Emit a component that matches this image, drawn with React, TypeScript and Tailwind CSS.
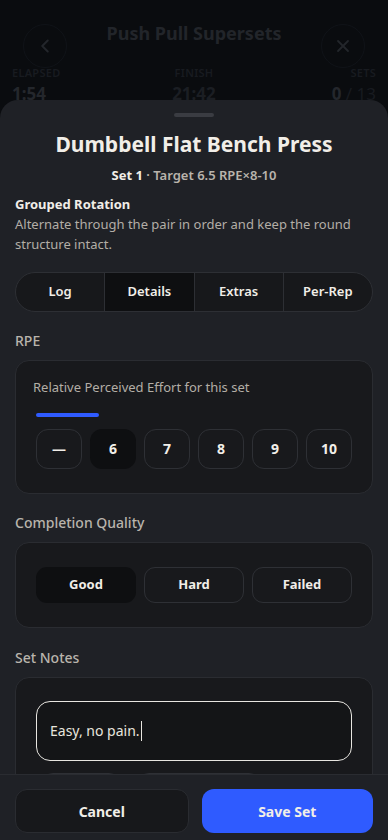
import { ChevronLeft, X } from "lucide-react";

const rpeValues = ["—", "6", "7", "8", "9", "10"];
const qualities = ["Good", "Hard", "Failed"];
const tabs = ["Log", "Details", "Extras", "Per-Rep"];

export default function App() {
  return (
    <div
      className="relative h-[840px] w-full overflow-hidden bg-[#0a0c0f]"
      style={{ fontFamily: '"Noto Sans", "Open Sans", sans-serif' }}
    >
      {/* background screen (dimmed) */}
      <div className="px-3 pt-6">
        <div className="flex items-center justify-between px-[11px]">
          <div className="flex h-11 w-11 items-center justify-center rounded-full border border-[#101318]">
            <ChevronLeft size={22} strokeWidth={2.2} className="text-[#23262b]" />
          </div>
          <h1 className="-mt-[26px] text-[18px] font-bold text-[#22252a]">
            Push Pull Supersets
          </h1>
          <div className="flex h-11 w-11 items-center justify-center rounded-full border border-[#101318]">
            <X size={20} strokeWidth={2.2} className="text-[#23262b]" />
          </div>
        </div>
        <div className="-mt-[3px] grid grid-cols-3">
          <div>
            <div className="text-[11px] font-semibold tracking-wide text-[#181b20]">ELAPSED</div>
            <div className="text-[17px] font-bold leading-6 text-[#24272c]">1:54</div>
          </div>
          <div className="text-center">
            <div className="text-[11px] font-semibold tracking-wide text-[#181b20]">FINISH</div>
            <div className="text-[17px] font-bold leading-6 text-[#1b1e23]">21:42</div>
          </div>
          <div className="text-right">
            <div className="text-[11px] font-semibold tracking-wide text-[#181b20]">SETS</div>
            <div className="text-[17px] leading-6">
              <span className="font-bold text-[#24272c]">0</span>
              <span className="text-[#181b20]"> / 13</span>
            </div>
          </div>
        </div>
      </div>

      {/* bottom sheet */}
      <div className="absolute inset-x-0 bottom-0 top-[100px] flex flex-col rounded-t-[18px] bg-[#1f2126]">
        <div className="flex-1 overflow-hidden px-[15px]">
          <div className="mx-auto mt-[13px] h-[4px] w-10 rounded-full bg-[#3a3c42]" />

          <h2 className="mt-[13px] text-center text-[21px] font-bold leading-7 text-[#f1eee8]">
            Dumbbell Flat Bench Press
          </h2>
          <p className="mt-[8px] text-center text-[13px] font-semibold text-[#b9b4ac]">
            <span className="font-bold text-[#f1eee8]">Set 1</span> · Target 6.5 RPE×8-10
          </p>

          <h3 className="mt-[9px] text-[13px] font-bold text-[#f1eee8]">Grouped Rotation</h3>
          <p className="text-[13px] leading-5 text-[#b3aea6]">
            Alternate through the pair in order and keep the round structure intact.
          </p>

          {/* tabs */}
          <div className="mt-[18px] flex h-[40px] overflow-hidden rounded-full border border-[#2d2f34] bg-[#17181b]">
            {tabs.map((t, i) => (
              <div
                key={t}
                className={
                  "flex flex-1 items-center justify-center text-[13px] font-semibold text-[#f1eee8] " +
                  (i > 0 ? "border-l border-[#2d2f34] " : "") +
                  (t === "Details" ? "bg-[#0e0f11]" : "")
                }
              >
                {t}
              </div>
            ))}
          </div>

          {/* RPE */}
          <div className="mt-[18px] text-[14px] font-medium text-[#b9b4ac]">RPE</div>
          <div className="mt-[9px] rounded-[14px] border border-[#2a2c31] bg-[#18191c] px-[20px] pb-[24px] pt-[17px]">
            <p className="-ml-[3px] text-[13px] text-[#b3aea6]">
              Relative Perceived Effort for this set
            </p>
            <div className="mt-[15px] h-[4px] w-[63px] rounded-full bg-[#2f5bff]" />
            <div className="mt-[12px] flex gap-[8px]">
              {rpeValues.map((v) => (
                <div
                  key={v}
                  className={
                    "flex h-[40px] w-[46px] items-center justify-center rounded-[12px] text-[14px] font-bold text-[#f1eee8] " +
                    (v === "6" ? "bg-[#0e0f11]" : "border border-[#2e3035]")
                  }
                >
                  {v}
                </div>
              ))}
            </div>
          </div>

          {/* Completion quality */}
          <div className="mt-[18px] text-[14px] font-medium text-[#b9b4ac]">Completion Quality</div>
          <div className="mt-[9px] flex gap-[8px] rounded-[14px] border border-[#2a2c31] bg-[#18191c] px-[20px] py-[24px]">
            {qualities.map((q) => (
              <div
                key={q}
                className={
                  "flex h-[36px] w-[100px] items-center justify-center rounded-[11px] text-[13px] font-bold text-[#f1eee8] " +
                  (q === "Good" ? "bg-[#0e0f11]" : "border border-[#2e3035]")
                }
              >
                {q}
              </div>
            ))}
          </div>

          {/* Set notes */}
          <div className="mt-[19px] text-[14px] font-medium text-[#b9b4ac]">Set Notes</div>
          <div className="mt-[9px] rounded-[14px] border border-[#2a2c31] bg-[#18191c] px-[20px] pt-[23px]">
            <div className="flex h-[60px] items-center rounded-[14px] border border-[#e8e6e1] bg-[#141517] px-[13px] text-[14px] text-[#e8e5df]">
              Easy, no pain.
              <span className="ml-[1px] inline-block h-[20px] w-px bg-[#e8e5df]" />
            </div>
            <div className="mt-[12px] flex gap-[16px] pl-[5px]">
              <div className="h-[30px] w-[80px] rounded-[12px] border border-[#2e3035]" />
              <div className="h-[30px] w-[124px] rounded-[12px] border border-[#2e3035]" />
            </div>
          </div>
        </div>

        {/* footer */}
        <div className="flex gap-[13px] border-t border-[#2a2c31] bg-[#1f2126] px-[15px] pb-[7px] pt-[14px]">
          <button className="h-[44px] flex-1 rounded-[12px] border border-[#2a2c31] bg-[#17181b] text-[14px] font-bold text-[#f1eee8]">
            Cancel
          </button>
          <button className="h-[44px] flex-1 rounded-[12px] bg-[#2f5bff] text-[14px] font-bold text-[#f1eee8]">
            Save Set
          </button>
        </div>
      </div>
    </div>
  );
}
